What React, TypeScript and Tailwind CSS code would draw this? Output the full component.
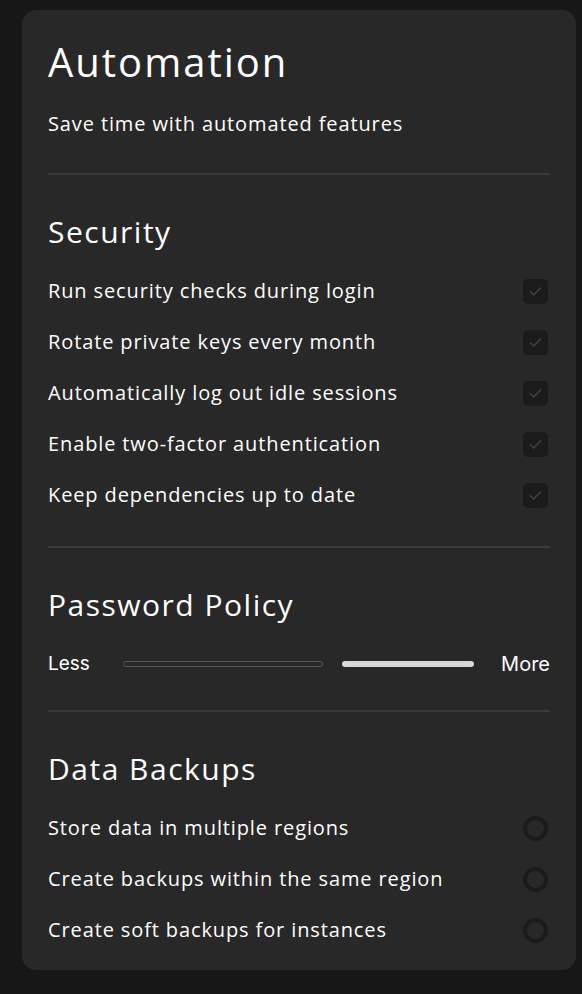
import React from 'react';

const securityItems = [
  'Run security checks during login',
  'Rotate private keys every month',
  'Automatically log out idle sessions',
  'Enable two-factor authentication',
  'Keep dependencies up to date',
];

const backupItems = [
  'Store data in multiple regions',
  'Create backups within the same region',
  'Create soft backups for instances',
];

const CheckBox: React.FC = () => (
  <div className="mr-[2px] w-[25px] h-[25px] rounded-[5px] bg-[#1b1b1b] flex items-center justify-center">
    <svg width="15" height="15" viewBox="0 0 24 24" fill="none" stroke="#424242" strokeWidth="2.5" strokeLinecap="round" strokeLinejoin="round">
      <path d="M4 12.5l5 5L20 6.5" />
    </svg>
  </div>
);

const Radio: React.FC = () => (
  <div className="mr-[2px] w-[25px] h-[25px] rounded-full border-[4px] border-[#1b1b1b]" />
);

export default function App() {
  return (
    <div className="min-h-[994px] bg-[#171717] pt-[10px] pl-[22px] pr-[6px] font-['Open_Sans',sans-serif] tracking-[0.055em] text-white">
      <div className="w-[554px] rounded-[14px] bg-[#282828] px-[26px] pt-[28px] pb-[26px]">
        <h1 className="text-[40px] leading-[48px] font-normal tracking-[0.05em]">Automation</h1>
        <p className="mt-[24px] text-[20px] leading-[28px]">Save time with automated features</p>
        <hr className="mt-[35px] border-0 h-[2px] bg-[#3a3a3a]" />

        <h2 className="mt-[39px] text-[30px] leading-[36px] tracking-[0.05em]">Security</h2>
        <div className="mt-[27px] flex flex-col gap-[23px]">
          {securityItems.map((item) => (
            <div key={item} className="flex items-center justify-between h-[28px]">
              <span className="text-[20px]">{item}</span>
              <CheckBox />
            </div>
          ))}
        </div>
        <hr className="mt-[37px] border-0 h-[2px] bg-[#3a3a3a]" />

        <h2 className="mt-[39px] text-[30px] leading-[36px] tracking-[0.05em]">Password Policy</h2>
        <div className="mt-[27px] flex items-center h-[28px] font-['Inter',sans-serif] tracking-normal text-[19px]">
          <span>Less</span>
          <div className="ml-[33px] w-[200px] h-[6px] rounded-full border border-[#555555]" />
          <div className="ml-[19px] w-[132px] h-[6px] rounded-full bg-[#d6d6d6]" />
          <span className="ml-auto text-[20px]">More</span>
        </div>
        <hr className="mt-[32px] border-0 h-[2px] bg-[#3a3a3a]" />

        <h2 className="mt-[39px] text-[30px] leading-[36px] tracking-[0.05em]">Data Backups</h2>
        <div className="mt-[27px] flex flex-col gap-[23px]">
          {backupItems.map((item) => (
            <div key={item} className="flex items-center justify-between h-[28px]">
              <span className="text-[20px]">{item}</span>
              <Radio />
            </div>
          ))}
        </div>
      </div>
    </div>
  );
}
